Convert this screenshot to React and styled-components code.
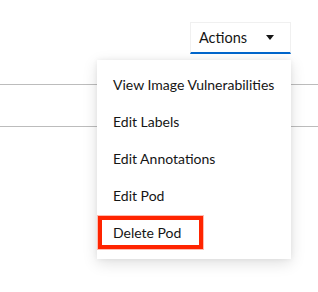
import styled, { createGlobalStyle } from "styled-components"

const GlobalStyle = createGlobalStyle`
    body {
        margin: 0;
        background: #fff;
        font-family: Lato, "Liberation Sans", sans-serif;
        color: #151515;
    }
`
const Page = styled.div`
    position: relative;
    width: 318px;
    height: 292px;
    overflow: hidden;
`
const Toolbar = styled.div`
    display: flex;
    justify-content: flex-end;
    padding: 22px 27px 0 0;
`
const Dropdown = styled.div`
    position: relative;
    z-index: 2;
`
const Toggle = styled.button`
    display: flex;
    align-items: center;
    gap: 19px;
    box-sizing: border-box;
    width: 101px;
    height: 32px;
    padding: 0 0 0 8px;
    background: #fff;
    border: 1px solid #f0f0f0;
    border-bottom: 2px solid #06c;
    font: inherit;
    font-size: 14.5px;
    color: #151515;
`
const Caret = styled.svg`
    width: 8px;
    height: 5px;
    fill: #151515;
`
const Menu = styled.ul`
    position: absolute;
    top: 38px;
    right: 0;
    width: 194px;
    margin: 0;
    padding: 6px 0 8px;
    list-style: none;
    background: #fff;
    box-shadow: 0 4px 14px rgba(3, 3, 3, 0.13), 0 0 5px rgba(3, 3, 3, 0.06);
`
const Item = styled.li`
    position: relative;
    display: flex;
    align-items: center;
    height: 37px;
    padding-left: 16px;
    font-size: 14px;
    white-space: nowrap;
`
const Highlight = styled.span`
    position: absolute;
    left: 1px;
    top: 2px;
    width: 105px;
    height: 33px;
    box-sizing: border-box;
    border: 4px solid #ff2400;
    box-shadow: 0 0 0 1px rgba(255, 60, 30, 0.35);
`
const Table = styled.div`
    display: flex;
    flex-direction: column;
`
const Row = styled.div`
    height: ${p => p.$h}px;
    border-bottom: 1px solid #bcbcbc;
`

const items = ["View Image Vulnerabilities", "Edit Labels", "Edit Annotations", "Edit Pod", "Delete Pod"]

export default function App() {
    return (
        <Page>
            <GlobalStyle />
            <Toolbar>
                <Dropdown>
                    <Toggle>
                        Actions
                        <Caret viewBox="0 0 8 5"><path d="M0 0h8L4 5z" /></Caret>
                    </Toggle>
                    <Menu>
                        {items.map(label => (
                            <Item key={label}>
                                {label === "Delete Pod" && <Highlight />}
                                {label}
                            </Item>
                        ))}
                    </Menu>
                </Dropdown>
            </Toolbar>
            <Table>
                <Row $h={30} />
                <Row $h={41} />
            </Table>
        </Page>
    )
}
